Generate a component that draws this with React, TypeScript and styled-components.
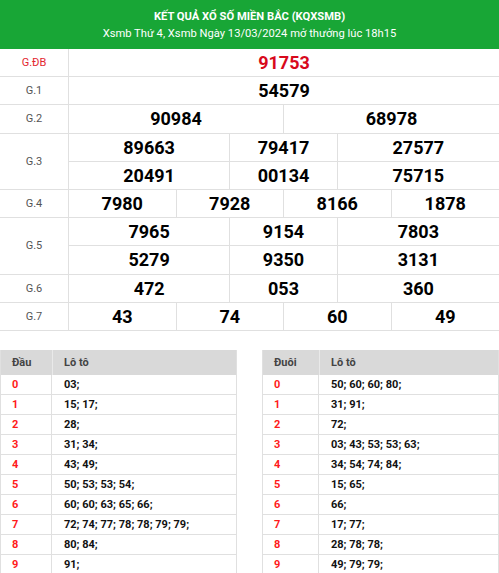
import React from "react";
import styled, { createGlobalStyle } from "styled-components";

const Global = createGlobalStyle`
  html, body { margin: 0; padding: 0; background: #fff; }
  body { font-family: Roboto, "Noto Sans", Arial, sans-serif; }
  * { box-sizing: border-box; }
`;

const Page = styled.div`
  width: 499px;
  overflow: hidden;
`;

const Header = styled.div`
  background: #18a636;
  color: #fff;
  height: 49px;
  display: flex;
  flex-direction: column;
  align-items: center;
  justify-content: center;
  gap: 4px;
  padding-top: 1px;
  text-align: center;
`;

const Title = styled.div`
  font-size: 11.2px;
  font-weight: 700;
  line-height: 13px;
`;

const Sub = styled.div`
  font-size: 11.2px;
  line-height: 13px;
`;

const Results = styled.div`
  display: flex;
  flex-direction: column;
`;

const Prize = styled.div`
  display: grid;
  grid-template-columns: 69px 1fr;
`;

const Label = styled.div<{ $special?: boolean }>`
  border-right: 1px solid #e0e0e0;
  border-bottom: 1px solid #e0e0e0;
  display: flex;
  align-items: center;
  justify-content: center;
  font-size: 11px;
  color: ${(p) => (p.$special ? "#e3262f" : "#555")};
`;

const Lines = styled.div`
  display: flex;
  flex-direction: column;
`;

const Line = styled.div`
  display: grid;
  grid-template-columns: repeat(8, 1fr);
  height: 28.2px;
  border-bottom: 1px solid #e0e0e0;
`;

const Num = styled.div<{ $span: number; $red?: boolean }>`
  grid-column: span ${(p) => p.$span};
  display: flex;
  align-items: center;
  justify-content: center;
  font-size: 18px;
  font-weight: 700;
  color: ${(p) => (p.$red ? "#d8091c" : "#000")};
  border-right: 1px solid #e0e0e0;
  &:last-child { border-right: none; }
`;

const Loto = styled.div`
  display: flex;
  justify-content: space-between;
  margin-top: 19px;
`;

const LTable = styled.div<{ $first: number }>`
  width: 237px;
  display: grid;
  grid-template-columns: ${(p) => p.$first}px 1fr;
  border-right: 1px solid #e0e0e0;
  border-left: 1px solid #e0e0e0;
`;

const LHead = styled.div`
  background: #d9d9d9;
  height: 25px;
  display: flex;
  align-items: center;
  padding-left: 11px;
  font-size: 11px;
  font-weight: 700;
  color: #444;
  & + & { border-left: 1px solid #e9e9e9; }
`;

const LKey = styled.div`
  height: 20px;
  border-bottom: 1px solid #e0e0e0;
  border-right: 1px solid #e0e0e0;
  display: flex;
  align-items: center;
  padding-left: 11px;
  font-size: 11px;
  font-weight: 700;
  color: #ff1a1a;
`;

const LVal = styled.div`
  height: 20px;
  border-bottom: 1px solid #e0e0e0;
  display: flex;
  align-items: center;
  padding-left: 12px;
  font-size: 11px;
  font-weight: 700;
  color: #111;
`;

type P = { label: string; lines: { n: string; s: number }[][]; special?: boolean };

const prizes: P[] = [
  { label: "G.ĐB", special: true, lines: [[{ n: "91753", s: 8 }]] },
  { label: "G.1", lines: [[{ n: "54579", s: 8 }]] },
  { label: "G.2", lines: [[{ n: "90984", s: 4 }, { n: "68978", s: 4 }]] },
  {
    label: "G.3",
    lines: [
      [{ n: "89663", s: 3 }, { n: "79417", s: 2 }, { n: "27577", s: 3 }],
      [{ n: "20491", s: 3 }, { n: "00134", s: 2 }, { n: "75715", s: 3 }],
    ],
  },
  { label: "G.4", lines: [[{ n: "7980", s: 2 }, { n: "7928", s: 2 }, { n: "8166", s: 2 }, { n: "1878", s: 2 }]] },
  {
    label: "G.5",
    lines: [
      [{ n: "7965", s: 3 }, { n: "9154", s: 2 }, { n: "7803", s: 3 }],
      [{ n: "5279", s: 3 }, { n: "9350", s: 2 }, { n: "3131", s: 3 }],
    ],
  },
  { label: "G.6", lines: [[{ n: "472", s: 3 }, { n: "053", s: 2 }, { n: "360", s: 3 }]] },
  { label: "G.7", lines: [[{ n: "43", s: 2 }, { n: "74", s: 2 }, { n: "60", s: 2 }, { n: "49", s: 2 }]] },
];

const dau = ["03;", "15; 17;", "28;", "31; 34;", "43; 49;", "50; 53; 53; 54;", "60; 60; 63; 65; 66;", "72; 74; 77; 78; 78; 79; 79;", "80; 84;", "91;"];
const duoi = ["50; 60; 60; 80;", "31; 91;", "72;", "03; 43; 53; 53; 63;", "34; 54; 74; 84;", "15; 65;", "66;", "17; 77;", "28; 78; 78;", "49; 79; 79;"];

const LotoTable = ({ head, rows, first }: { head: string; rows: string[]; first: number }) => (
  <LTable $first={first}>
    <LHead>{head}</LHead>
    <LHead>Lô tô</LHead>
    {rows.map((r, i) => (
      <React.Fragment key={i}>
        <LKey>{i}</LKey>
        <LVal>{r}</LVal>
      </React.Fragment>
    ))}
  </LTable>
);

export default function App() {
  return (
    <Page>
      <Global />
      <Header>
        <Title>KẾT QUẢ XỔ SỐ MIỀN BẮC (KQXSMB)</Title>
        <Sub>Xsmb Thứ 4, Xsmb Ngày 13/03/2024 mở thưởng lúc 18h15</Sub>
      </Header>
      <Results>
        {prizes.map((p) => (
          <Prize key={p.label}>
            <Label $special={p.special}>{p.label}</Label>
            <Lines>
              {p.lines.map((l, i) => (
                <Line key={i}>
                  {l.map((c, j) => (
                    <Num key={j} $span={c.s} $red={p.special}>
                      {c.n}
                    </Num>
                  ))}
                </Line>
              ))}
            </Lines>
          </Prize>
        ))}
      </Results>
      <Loto>
        <LotoTable head="Đầu" rows={dau} first={51} />
        <LotoTable head="Đuôi" rows={duoi} first={56} />
      </Loto>
    </Page>
  );
}
